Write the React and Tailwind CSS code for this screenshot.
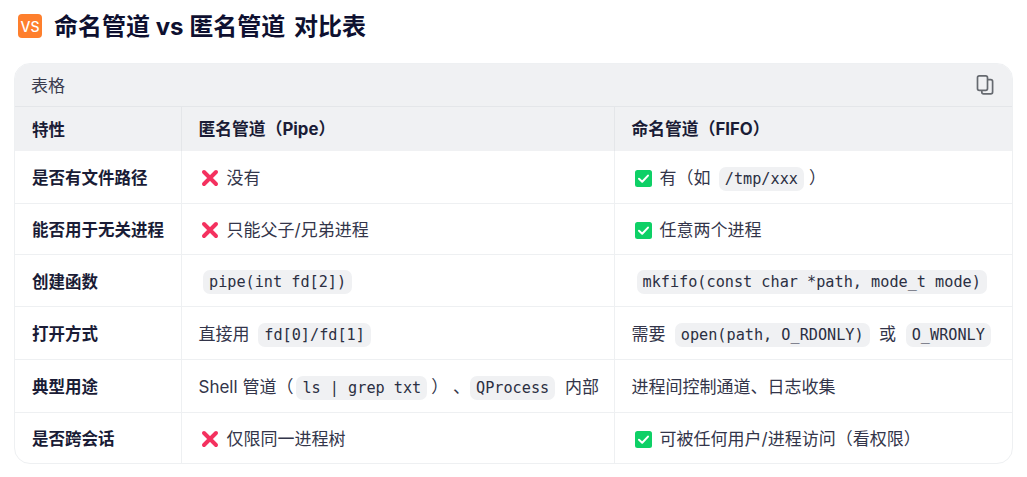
const sans = "font-['Inter','Noto_Sans_CJK_SC',sans-serif]";

function Code({ children, className = "mx-[4.5px]" }) {
  return (
    <code className={`${className} inline-block h-[24px] rounded-[7px] bg-[#f0f1f3] px-[6px] font-['DejaVu_Sans_Mono',monospace] text-[15.2px] leading-[24px] text-[#2b2f42]`}>
      {children}
    </code>
  );
}

function Cross() {
  return (
    <svg width="18" height="18" viewBox="0 0 18 18" className="ml-[2px] mr-[8px] inline-block shrink-0 align-[-3px]">
      <path d="M3 3 L15 15 M15 3 L3 15" stroke="#f4315f" strokeWidth="4" strokeLinecap="round" />
    </svg>
  );
}

function Check() {
  return (
    <svg width="17" height="17" viewBox="0 0 17 17" className="mr-[8px] ml-[3px] inline-block shrink-0 align-[-3px]">
      <rect x="0" y="0" width="17" height="17" rx="2.5" fill="#0ed066" />
      <path d="M4 8.8 L7.2 11.8 L13 5.6" stroke="#fff" strokeWidth="2" fill="none" strokeLinecap="round" strokeLinejoin="round" />
    </svg>
  );
}

const rows = [
  ["是否有文件路径", <><Cross />没有</>, <><Check />有（如 <Code className="ml-[3.5px] mr-[5px]">/tmp/xxx</Code>）</>, "h-[52px]"],
  ["能否用于无关进程", <><Cross />只能父子/兄弟进程</>, <><Check />任意两个进程</>, "h-[51px]"],
  ["创建函数", <Code>pipe(int fd[2])</Code>, <Code className="mx-[5px]">mkfifo(const char *path, mode_t mode)</Code>, "h-[52px]"],
  ["打开方式", <>直接用 <Code className="ml-[4px] mr-[4.5px]">fd[0]/fd[1]</Code></>, <>需要 <Code>open(path, O_RDONLY)</Code> 或 <Code className="ml-[5px] mr-[4px]">O_WRONLY</Code></>, "h-[53px]"],
  ["典型用途", <>Shell 管道（<Code className="ml-[3px] mr-[4px]">ls | grep txt</Code>） 、<Code className="ml-0 mr-[5px]">QProcess</Code> 内部</>, "进程间控制通道、日志收集", "h-[53px]"],
  ["是否跨会话", <><Cross />仅限同一进程树</>, <><Check />可被任何用户/进程访问（看权限）</>, "h-[51px]"],
];

export default function App() {
  return (
    <div className={`h-[477px] w-[1027px] overflow-hidden bg-white ${sans} text-[#1a1c2e]`}>
      <div className="flex h-[63px] items-start pl-[18px] pt-[14px]">
        <div className="flex h-[24px] w-[24px] items-center justify-center rounded-[4px] bg-[#fe7f2d] text-[14px] font-medium text-white">
          VS
        </div>
        <h1 className="ml-[12px] text-[24px] font-bold leading-[26px] text-[#0e1030]">
          命名管道 vs 匿名管道 <span className="ml-[3px]">对比表</span>
        </h1>
      </div>
      <div className="mx-[14px] w-[999px] overflow-hidden rounded-[16px] border border-[#eef0f2]">
        <div className="flex h-[43px] items-center justify-between border-b border-[#e4e6e9] bg-[#f0f1f3] pl-[16px] pr-[17px]">
          <span className="pt-[4px] text-[17px] text-[#3a3c4e]">表格</span>
          <svg width="20" height="20" viewBox="0 0 20 20" fill="none" stroke="#666a70" strokeWidth="1.7">
            <rect x="2.5" y="0.9" width="10" height="14.4" rx="1.8" />
            <path d="M12.8 4.6 H15.8 A1.8 1.8 0 0 1 17.6 6.4 V17 A1.8 1.8 0 0 1 15.8 18.8 H8.6 A1.8 1.8 0 0 1 6.8 17 V15.6" />
          </svg>
        </div>
        <table className="w-full table-fixed border-collapse text-[17px] text-[#33354a]">
          <colgroup>
            <col className="w-[166px]" />
            <col className="w-[433px]" />
            <col />
          </colgroup>
          <thead>
            <tr className="h-[44px] bg-[#f0f1f3] text-left text-[16.8px] font-bold text-[#1a1c36]">
              <th className="pl-[17px] pt-[2px] text-[16.5px] font-bold">特性</th>
              <th className="border-l border-[#e4e6e9] px-[17px] pt-[2px] font-bold">匿名管道（Pipe）</th>
              <th className="border-l border-[#e4e6e9] px-[17px] pt-[2px] font-bold">命名管道（FIFO）</th>
            </tr>
          </thead>
          <tbody>
            {rows.map((r, i) => (
              <tr key={i} className={`${r[3]} ${i ? "border-t border-[#eef0f2]" : ""}`}>
                <td className="whitespace-nowrap pl-[17px] pt-[4px] text-[16.5px] font-bold text-[#1a1c36]">{r[0]}</td>
                <td className="whitespace-nowrap border-l border-[#eef0f2] px-[17px] pt-[4px]">{r[1]}</td>
                <td className="whitespace-nowrap border-l border-[#eef0f2] px-[17px] pt-[4px]">{r[2]}</td>
              </tr>
            ))}
          </tbody>
        </table>
      </div>
    </div>
  );
}
